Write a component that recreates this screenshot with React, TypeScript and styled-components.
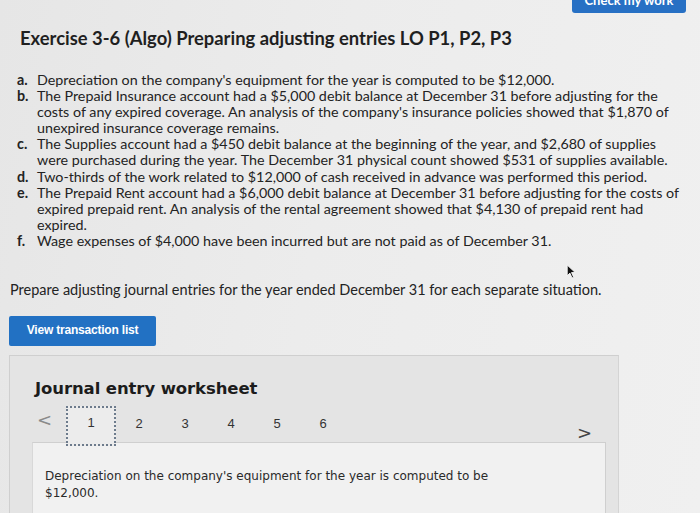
import React from "react";
import styled, { createGlobalStyle } from "styled-components";

const Global = createGlobalStyle`
  html, body { margin: 0; padding: 0; }
  body {
    width: 700px; height: 513px; overflow: hidden;
    background: linear-gradient(100deg, #e6e6e6 0%, #ececec 45%, #f0f0f0 100%);
    font-family: "Lato", "Liberation Sans", sans-serif;
    color: #232323;
  }
`;

const Page = styled.div`
  position: relative;
  display: flex;
  flex-direction: column;
  padding: 0 0 0 9px;
`;

const TopBar = styled.div`
  display: flex;
  justify-content: flex-end;
  padding-right: 14px;
  height: 13px;
`;

const CheckButton = styled.button`
  margin-top: -14px;
  width: 114px;
  height: 27px;
  border: none;
  border-radius: 3px;
  background: #2770c4;
  color: #fff;
  font: 700 13px "Lato", "Liberation Sans", sans-serif;
  padding: 0;
`;

const Title = styled.h1`
  margin: 14px 0 0 11px;
  font: 700 18.4px "Lato", "Liberation Sans", sans-serif;
  color: #1f1f1f;
`;

const List = styled.ol`
  list-style: none;
  margin: 23px 0 0 8px;
  padding: 0;
  display: flex;
  flex-direction: column;
`;

const Item = styled.li`
  display: grid;
  grid-template-columns: 20px 1fr;
  font-size: 14.3px;
  line-height: 16.1px;
`;

const Marker = styled.span`
  font-weight: 700;
`;

const Prompt = styled.p`
  margin: 32px 0 0 1px;
  font-size: 14.5px;
`;

const ViewButton = styled.button`
  align-self: flex-start;
  margin-top: 18px;
  width: 147px;
  height: 30px;
  border: none;
  border-radius: 2px;
  background: #2271c3;
  color: #fff;
  font: 700 12px "Liberation Sans", Arial, sans-serif;
  letter-spacing: -0.2px;
  padding: 0 0 2px 0;
  text-align: center;
`;

const Panel = styled.section`
  margin-top: 9px;
  width: 608px;
  height: 170px;
  background: #e4e4e4;
  border-top: 1px solid #cfcfcf;
  border-left: 1px solid #cfcfcf;
  border-right: 1px solid #d4d4d4;
  display: flex;
  flex-direction: column;
`;

const PanelTitle = styled.h2`
  margin: 23px 0 0 25px;
  font: 700 16.5px "DejaVu Sans", Verdana, sans-serif;
  letter-spacing: -0.1px;
  color: #1c1c1c;
`;

const TabsRow = styled.div`
  display: flex;
  align-items: center;
  margin: 4px 0 0 27px;
  height: 40px;
  position: relative;
`;

const Arrow = styled.span`
  color: #8a8a8a;
  font: 400 18px "DejaVu Sans", sans-serif;
  width: 29px;
  margin-top: -6px;
`;

const Tab = styled.div<{ $active?: boolean }>`
  width: ${(p) => (p.$active ? "50px" : "46px")};
  height: 40px;
  box-sizing: border-box;
  display: flex;
  align-items: center;
  justify-content: center;
  font: 400 13px "Liberation Sans", Arial, sans-serif;
  color: #333;
  border: ${(p) => (p.$active ? "2px dotted #6d7b8c" : "none")};
  background: ${(p) => (p.$active ? "#ececec" : "transparent")};
  margin-top: 8px;
  padding-bottom: ${(p) => (p.$active ? "8px" : "6px")};
`;

const NextArrow = styled.span`
  position: absolute;
  left: 540px;
  top: 20px;
  color: #444;
  font: 400 18px "DejaVu Sans", sans-serif;
`;

const Content = styled.div`
  margin: 0 0 0 22px;
  width: 548px;
  flex: 1;
  background: #f1f1f1;
  border-top: 1px solid #cfcfcf;
  border-right: 1px solid #cfcfcf;
  border-left: 1px solid #d8d8d8;
  padding: 25px 12px 0 12px;
  font: 400 12px "DejaVu Sans", Verdana, sans-serif;
  line-height: 17px;
  color: #2a2a2a;
`;

const Cursor = styled.svg`
  position: absolute;
  left: 566px;
  top: 264px;
`;

const items: [string, React.ReactNode][] = [
  ["a.", <>Depreciation on the company's equipment for the year is computed to be $12,000.</>],
  ["b.", <>The Prepaid Insurance account had a $5,000 debit balance at December 31 before adjusting for the<br />costs of any expired coverage. An analysis of the company's insurance policies showed that $1,870 of<br />unexpired insurance coverage remains.</>],
  ["c.", <>The Supplies account had a $450 debit balance at the beginning of the year, and $2,680 of supplies<br />were purchased during the year. The December 31 physical count showed $531 of supplies available.</>],
  ["d.", <>Two-thirds of the work related to $12,000 of cash received in advance was performed this period.</>],
  ["e.", <>The Prepaid Rent account had a $6,000 debit balance at December 31 before adjusting for the costs of<br />expired prepaid rent. An analysis of the rental agreement showed that $4,130 of prepaid rent had<br />expired.</>],
  ["f.", <>Wage expenses of $4,000 have been incurred but are not paid as of December 31.</>],
];

export default function App() {
  return (
    <>
      <Global />
      <Page>
        <TopBar>
          <CheckButton>Check my work</CheckButton>
        </TopBar>
        <Title>Exercise 3-6 (Algo) Preparing adjusting entries LO P1, P2, P3</Title>
        <List>
          {items.map(([m, t]) => (
            <Item key={m}>
              <Marker>{m}</Marker>
              <span>{t}</span>
            </Item>
          ))}
        </List>
        <Prompt>Prepare adjusting journal entries for the year ended December 31 for each separate situation.</Prompt>
        <ViewButton>View transaction list</ViewButton>
        <Panel>
          <PanelTitle>Journal entry worksheet</PanelTitle>
          <TabsRow>
            <Arrow>&lt;</Arrow>
            <Tab $active>1</Tab>
            <Tab>2</Tab>
            <Tab>3</Tab>
            <Tab>4</Tab>
            <Tab>5</Tab>
            <Tab>6</Tab>
            <NextArrow>&gt;</NextArrow>
          </TabsRow>
          <Content>
            Depreciation on the company's equipment for the year is computed to be
            <br />
            $12,000.
          </Content>
        </Panel>
        <Cursor width="11" height="15" viewBox="0 0 10 14">
          <path d="M1 1 L1 11 L3.5 8.5 L5.5 13 L7 12.3 L5 8 L8.5 8 Z" fill="#111" stroke="#fff" strokeWidth="0.8" />
        </Cursor>
      </Page>
    </>
  );
}
